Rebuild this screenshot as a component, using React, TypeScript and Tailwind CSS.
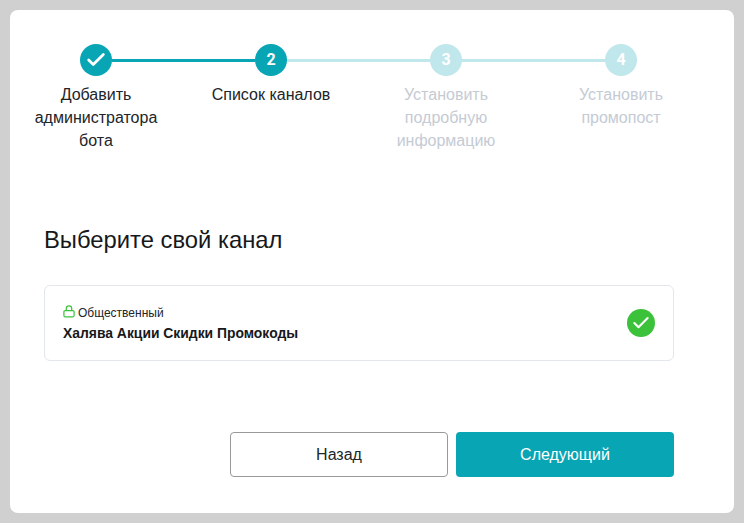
import { Check } from 'lucide-react';

const steps = [
  { n: '1', label: ['Добавить', 'администратора', 'бота'], done: true, active: true },
  { n: '2', label: ['Список каналов'], done: false, active: true },
  { n: '3', label: ['Установить', 'подробную', 'информацию'], done: false, active: false },
  { n: '4', label: ['Установить', 'промопост'], done: false, active: false },
];

export default function App() {
  return (
    <div className="w-[744px] h-[523px] bg-[#d0d0d0] p-[10px] font-['Liberation_Sans',sans-serif]">
      <div className="w-[724px] h-[503px] bg-white rounded-lg pt-[34px] flex flex-col">
        {/* stepper */}
        <div className="flex items-center pl-[70px] font-['Roboto',sans-serif]">
          <div className="w-8 h-8 rounded-full bg-[#08a5b5] flex items-center justify-center text-white">
            <Check size={22} strokeWidth={3} />
          </div>
          <div className="w-[143px] h-[3px] bg-[#08a5b5]" />
          <div className="w-8 h-8 rounded-full bg-[#08a5b5] flex items-center justify-center text-white text-base font-bold">
            2
          </div>
          <div className="w-[143px] h-[3px] bg-[#bfe7ec]" />
          <div className="w-8 h-8 rounded-full bg-[#bfe7ec] flex items-center justify-center text-white text-base font-bold">
            3
          </div>
          <div className="w-[143px] h-[3px] bg-[#bfe7ec]" />
          <div className="w-8 h-8 rounded-full bg-[#bfe7ec] flex items-center justify-center text-white text-base font-bold">
            4
          </div>
        </div>
        <div className="flex gap-[25px] pl-[11px] mt-[7px] h-[69px]">
          {steps.map((s) => (
            <div
              key={s.n}
              className={
                s.active
                  ? 'w-[150px] text-center text-base leading-[23px] text-[#212529]'
                  : 'w-[150px] text-center text-base leading-[23px] text-[#c5cbd4]'
              }
            >
              {s.label.map((l) => (
                <div key={l}>{l}</div>
              ))}
            </div>
          ))}
        </div>

        <h2 className="ml-[34px] mt-[72px] text-[23.8px] leading-[32px] text-[#16181b]">Выберите свой канал</h2>

        <div className="ml-[34px] mt-[29px] w-[630px] h-[76px] border border-[#e3e6ea] rounded-md flex items-center justify-between pl-[18px] pr-[18px]">
          <div>
            <div className="mt-[1px] flex items-center gap-[3px] text-[12px] leading-[16px] text-[#212529]">
              <svg width="12" height="13" viewBox="0 0 12 13" fill="none" stroke="#3cc13b" strokeWidth="1.2" className="-mt-[4px]">
                <rect x="0.9" y="5.6" width="10.2" height="6.2" rx="1.2" />
                <path d="M3.3 5.6V3.5a2.7 2.7 0 0 1 5.4 0v2.1" />
              </svg>
              Общественный
            </div>
            <div className="mt-[3px] text-[13.9px] leading-[18px] font-bold text-[#16181b]">
              Халява Акции Скидки Промокоды
            </div>
          </div>
          <div className="w-7 h-7 rounded-full bg-[#3cc13b] flex items-center justify-center text-white">
            <Check size={20} strokeWidth={2.5} />
          </div>
        </div>

        <div className="ml-[220px] mt-[71px] flex gap-2">
          <button className="w-[218px] h-[45px] border border-[#999999] rounded text-base text-[#212529] bg-white">
            Назад
          </button>
          <button className="w-[218px] h-[45px] rounded text-base text-white bg-[#08a5b5]">Следующий</button>
        </div>
      </div>
    </div>
  );
}
